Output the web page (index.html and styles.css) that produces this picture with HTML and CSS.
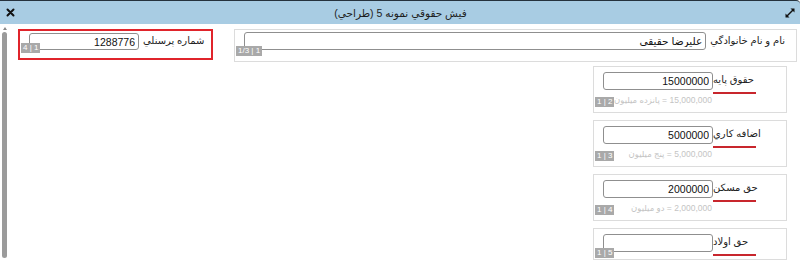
FILE: index.html
```html
<!DOCTYPE html>
<html lang="fa">
<head>
    <meta charset="UTF-8">
    <meta name="viewport" content="width=device-width, initial-scale=1.0">
    <title>فيش حقوقي</title>
    <link rel="stylesheet" href="styles.css">
</head>
<body>
    <div class="window">
        <div class="titlebar">
            <span class="tb-icon close">
                <svg width="9" height="9" viewBox="0 0 9 9"><path d="M1.5 1.5 L7.5 7.5 M7.5 1.5 L1.5 7.5" stroke="#111" stroke-width="2" stroke-linecap="round"/></svg>
            </span>
            <div class="title">فيش حقوقي نمونه 5 (طراحي)</div>
            <span class="tb-icon expand">
                <svg width="10" height="10" viewBox="0 0 10 10"><path d="M2 8 L8 2" stroke="#111" stroke-width="1.4"/><path d="M0.5 9.5 L0.5 5.5 L4.5 9.5 Z M9.5 0.5 L9.5 4.5 L5.5 0.5 Z" fill="#111"/></svg>
            </span>
        </div>

        <div class="content">
            <div class="scrollbar">
                <span class="scroll-arrow"></span>
                <span class="scroll-thumb"></span>
            </div>

            <div class="form" dir="rtl">
                <div class="top-row">
                    <div class="box wide">
                        <label for="fullName">نام و نام خانوادگي</label>
                        <input type="text" id="fullName" value="عليرضا حقيقي">
                        <span class="badge">1/3 | 1</span>
                    </div>
                    <div class="box selected">
                        <label for="personnelNo">شماره پرسنلي</label>
                        <input type="text" id="personnelNo" value="1288776">
                        <span class="badge">4 | 1</span>
                    </div>
                </div>

                <div class="column">
                    <div class="box money">
                        <div class="field">
                            <label class="underlined" for="baseSalary">حقوق پايه</label>
                            <input type="text" id="baseSalary" value="15000000">
                        </div>
                        <div class="hint">15,000,000 = پانزده ميليون</div>
                        <span class="badge">1 | 2</span>
                    </div>
                    <div class="box money">
                        <div class="field">
                            <label class="underlined" for="overtime">اضافه كاري</label>
                            <input type="text" id="overtime" value="5000000">
                        </div>
                        <div class="hint">5,000,000 = پنج ميليون</div>
                        <span class="badge">1 | 3</span>
                    </div>
                    <div class="box money">
                        <div class="field">
                            <label class="underlined" for="housing">حق مسكن</label>
                            <input type="text" id="housing" value="2000000">
                        </div>
                        <div class="hint">2,000,000 = دو ميليون</div>
                        <span class="badge">1 | 4</span>
                    </div>
                    <div class="box money short">
                        <div class="field">
                            <label class="underlined" for="children">حق اولاد</label>
                            <input type="text" id="children" value="">
                        </div>
                        <span class="badge">1 | 5</span>
                    </div>
                </div>
            </div>
        </div>
    </div>
</body>
</html>
```

FILE: styles.css
```css
* {
    box-sizing: border-box;
}

body {
    margin: 0;
    font-family: "Liberation Sans", "DejaVu Sans", sans-serif;
    font-size: 10px;
    color: #222;
    background-color: #fff;
}

.window {
    width: 800px;
    height: 265px;
    overflow: hidden;
}

.titlebar {
    height: 24px;
    background-color: #a8cce3;
    border-top: 1px solid #25323d;
    border-top-right-radius: 4px;
    display: flex;
    align-items: center;
    justify-content: space-between;
    padding: 0 5px 0 6px;
}

.title {
    font-size: 10.5px;
    color: #1d1d1d;
}

.tb-icon {
    display: flex;
    width: 10px;
    height: 10px;
}

.content {
    display: flex;
    height: 241px;
}

.scrollbar {
    width: 5px;
    margin-left: 2px;
    padding-top: 3px;
    display: flex;
    flex-direction: column;
    align-items: center;
}

.scroll-arrow {
    width: 0;
    height: 0;
    border-left: 2px solid transparent;
    border-right: 2px solid transparent;
    border-bottom: 3px solid #888;
}

.scroll-thumb {
    width: 5px;
    height: 226px;
    margin-top: 2px;
    border-radius: 3px;
    background-color: #9b9b9b;
}

.form {
    flex: 1;
    padding: 5px 3px 0 0;
}

.top-row {
    display: flex;
    gap: 21px;
}

.box {
    position: relative;
    border: 1px solid #dcdcdc;
    background-color: #fff;
}

.box label {
    white-space: nowrap;
    font-size: 10px;
}

.box input {
    height: 18px;
    padding: 0 3px;
    border: 1px solid #8f8f8f;
    border-radius: 3px;
    font-family: inherit;
    font-size: 10.5px;
    color: #111;
    background-color: #fff;
}

.wide {
    width: 563px;
    height: 33px;
    display: flex;
    align-items: flex-start;
    padding: 2px 11px 0 9px;
}

.wide label {
    line-height: 18px;
    margin-left: 4px;
}

.wide input {
    flex: 1;
}

.selected {
    width: 195px;
    height: 31px;
    border: 2px solid #e0242b;
    display: flex;
    justify-content: flex-end;
    align-items: flex-start;
    padding: 2px 7px 0 9px;
}

.selected label {
    line-height: 16px;
    margin-left: 4px;
}

.selected input {
    width: 110px;
    height: 17px;
}

.column {
    width: 194px;
    margin: 4px 10px 0 0;
    display: flex;
    flex-direction: column;
    gap: 7px;
}

.money {
    height: 47px;
    padding: 5px 0 0 9px;
}

.money.short {
    height: 32px;
}

.field {
    display: flex;
    justify-content: flex-end;
}

.field input {
    width: 110px;
}

.underlined {
    position: relative;
    min-width: 43px;
    height: 22px;
    margin-right: 4px;
    padding-top: 2px;
    text-align: left;
}

.underlined::after {
    content: "";
    position: absolute;
    left: 0;
    bottom: 0;
    width: 43px;
    height: 2px;
    background-color: #c8262d;
}

.hint {
    width: 110px;
    margin-right: auto;
    padding-right: 1px;
    font-size: 8.5px;
    line-height: 13px;
    white-space: nowrap;
    color: #c4c4c4;
    text-align: right;
}

.badge {
    position: absolute;
    left: 1px;
    bottom: 5px;
    direction: ltr;
    padding: 0 2px;
    font-size: 8px;
    line-height: 10px;
    color: #fff;
    background-color: #a9a9a9;
}

.money .badge {
    bottom: 5px;
}

.money.short .badge {
    bottom: 1px;
}
```
